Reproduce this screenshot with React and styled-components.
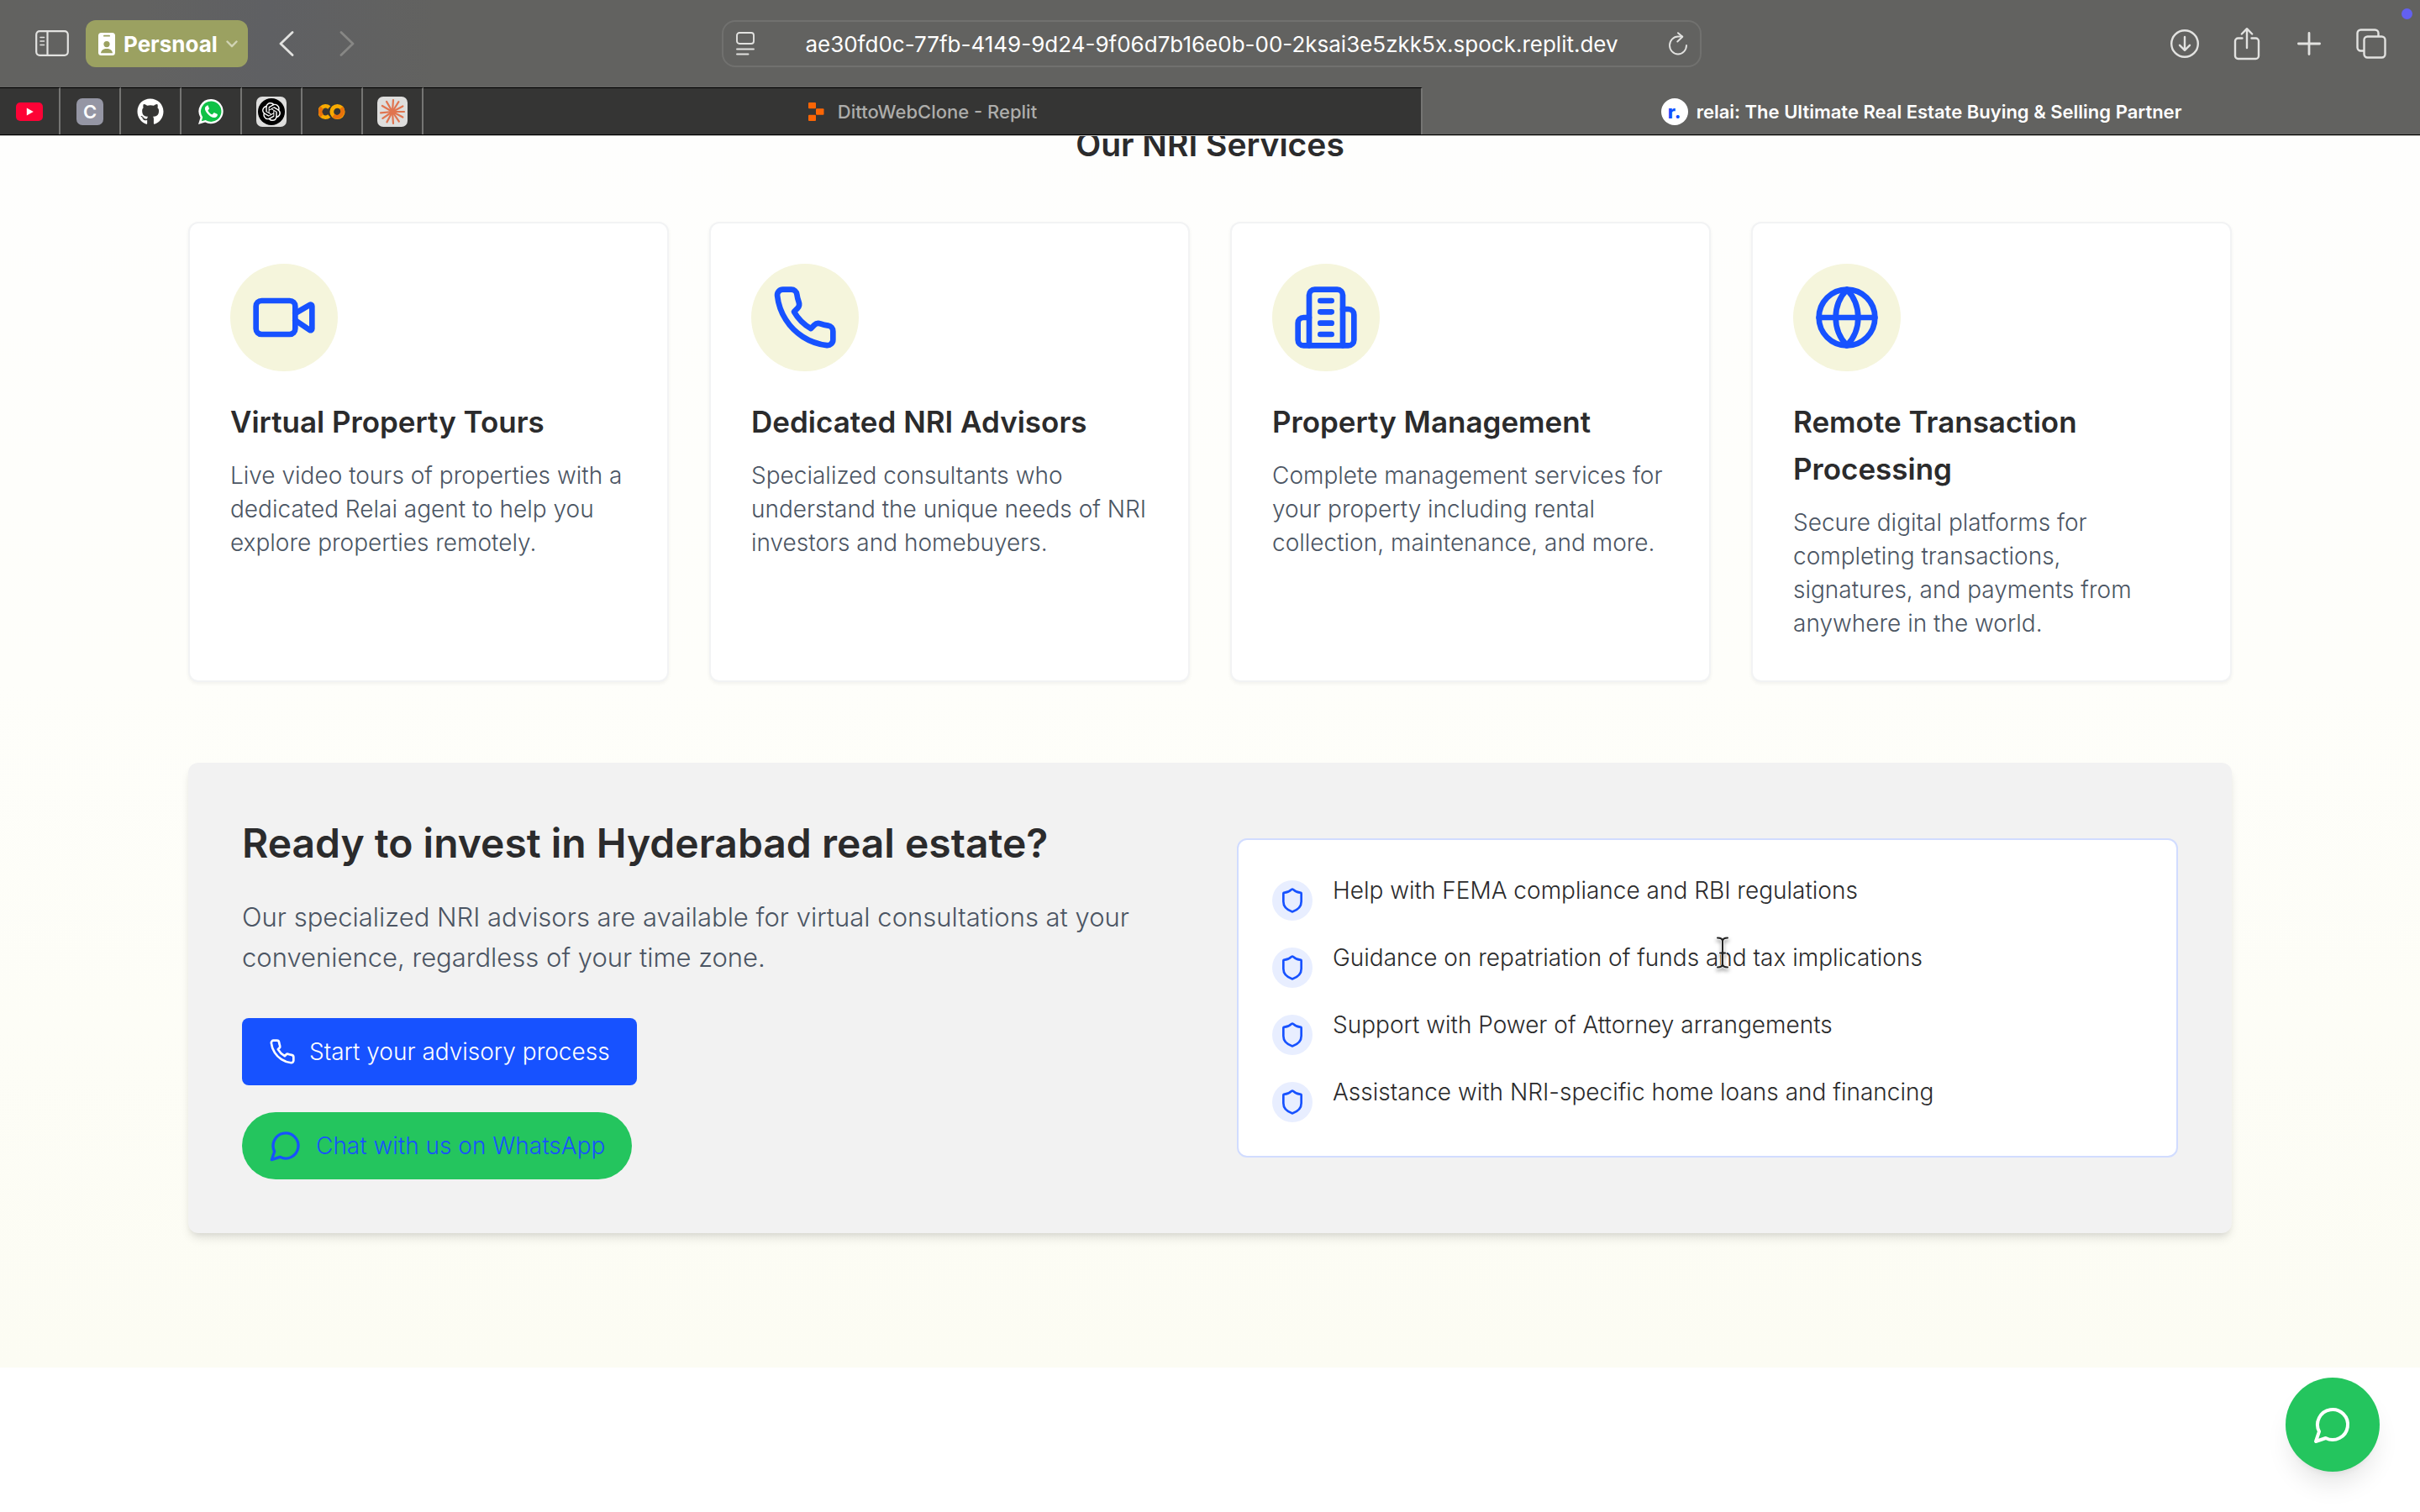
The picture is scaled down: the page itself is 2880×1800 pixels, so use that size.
import React from "react";
import styled, { createGlobalStyle } from "styled-components";
import { FaGithub } from "react-icons/fa";
import { SiOpenai } from "react-icons/si";

const GlobalStyle = createGlobalStyle`
  *, *::before, *::after { box-sizing: border-box; }
  body {
    margin: 0;
    background: #ffffff;
    color: #2b2b2c;
    font-family: Inter, "Liberation Sans", sans-serif;
    font-weight: 300;
    -webkit-font-smoothing: antialiased;
  }
  h2, h3, p, ul { margin: 0; padding: 0; }
  button, input { font: inherit; color: inherit; }
  svg { display: block; flex: none; }
`;

/* ---------- browser chrome ---------- */

const Page = styled.div`
  display: flex;
  flex-direction: column;
  min-height: 100vh;
`;

const Chrome = styled.header`
  position: relative;
  z-index: 2;
  background: linear-gradient(90deg, #626260 0%, #626261 6%, #5f6063 11%, #626260 18%, #626260 100%);
  box-shadow: 0 1px 0 #c2c2bf;
  color: #e2e2e0;
`;

const Toolbar = styled.div`
  display: grid;
  grid-template-columns: 1fr minmax(0, 1166px) 1fr;
  align-items: center;
  height: 104px;
  padding: 0 34px 0 38px;
`;

const ToolGroup = styled.div`
  display: flex;
  align-items: center;
  justify-content: ${(p) => (p.$end ? "flex-end" : "flex-start")};
  gap: ${(p) => p.$gap}px;
`;

const IconButton = styled.button`
  display: flex;
  align-items: center;
  justify-content: center;
  width: 48px;
  height: 56px;
  padding: 0;
  border: 0;
  background: none;
  color: ${(p) => (p.disabled ? "#878785" : "#e2e2e0")};
`;

const ProfileButton = styled.button`
  display: flex;
  align-items: center;
  gap: 10px;
  height: 56px;
  margin-right: 6px;
  padding: 0 12px 0 15px;
  border: 0;
  border-radius: 12px;
  background: #9ba161;
  color: #ffffff;
  font-size: 26px;
  font-weight: 700;
`;

const AddressBar = styled.form`
  display: flex;
  align-items: center;
  height: 56px;
  padding: 0 8px;
  border: 2px solid #71716f;
  border-radius: 16px;
`;

const AddressInput = styled.input`
  flex: 1;
  min-width: 0;
  padding: 0;
  border: 0;
  outline: 0;
  background: none;
  color: #ffffff;
  font-size: 26px;
  font-weight: 400;
  text-align: center;
`;

const AddressButton = styled.button`
  display: flex;
  justify-content: center;
  width: 36px;
  padding: 0;
  border: 0;
  background: none;
`;

const NotificationDot = styled.span`
  position: absolute;
  top: 10px;
  right: 9px;
  width: 13px;
  height: 13px;
  border-radius: 50%;
  background: #6360f0;
`;

const TabStrip = styled.nav`
  display: flex;
  height: 57px;
  border-bottom: 1px solid #000000;
`;

const PinnedTab = styled.button`
  display: flex;
  align-items: center;
  justify-content: center;
  width: 72px;
  padding: 0;
  border: 0;
  border-top: 1px solid #000000;
  border-right: 2px solid #757573;
  background: #353534;
`;

const Tab = styled.button`
  display: flex;
  flex: 1;
  align-items: center;
  justify-content: center;
  gap: ${(p) => (p.$active ? 10 : 16)}px;
  min-width: 0;
  padding: 0;
  border: 0;
  border-top: 1px solid ${(p) => (p.$active ? "transparent" : "#000000")};
  border-right: ${(p) => (p.$active ? "0" : "2px solid #757573")};
  background: ${(p) => (p.$active ? "transparent" : "#353534")};
  color: ${(p) => (p.$active ? "#ffffff" : "#adadab")};
  font-size: 22px;
  font-weight: ${(p) => (p.$active ? 600 : 500)};
  white-space: nowrap;
`;

const LetterBadge = styled.span`
  display: flex;
  align-items: center;
  justify-content: center;
  width: 32px;
  height: 32px;
  border-radius: 7px;
  background: #9596a4;
  color: #ffffff;
  font-size: 22px;
  font-weight: 600;
`;

const AppTile = styled.span`
  display: flex;
  align-items: center;
  justify-content: center;
  width: 36px;
  height: 36px;
  border-radius: 7px;
  background: #dededd;
`;

const BlackDisc = styled.span`
  display: flex;
  align-items: center;
  justify-content: center;
  width: 32px;
  height: 32px;
  border-radius: 50%;
  background: #000000;
  color: #ffffff;
`;

const SiteBadge = styled.span`
  display: flex;
  align-items: center;
  justify-content: center;
  width: 32px;
  height: 32px;
  border-radius: 50%;
  background: #ffffff;
  color: #1150ff;
  font-size: 22px;
  font-weight: 800;
`;

const Stroke = ({ size, width = 2, viewBox = "0 0 24 24", children }) => (
  <svg
    width={size}
    height={size}
    viewBox={viewBox}
    fill="none"
    stroke="currentColor"
    strokeWidth={width}
    strokeLinecap="round"
    strokeLinejoin="round"
    aria-hidden="true"
  >
    {children}
  </svg>
);

const SidebarIcon = () => (
  <svg width="40" height="32" viewBox="0 0 40 32" fill="none" stroke="currentColor" strokeWidth="2.2" strokeLinecap="round">
    <rect x="1.2" y="1.2" width="37.6" height="28.6" rx="4" />
    <path d="M14.5 1.5v28" />
    <path d="M6 8.5h4.5M6 13h4.5M6 17.5h4.5" strokeWidth="1.6" />
  </svg>
);

const BadgeIcon = () => (
  <svg width="20" height="27" viewBox="0 0 20 27">
    <rect width="20" height="27" rx="3.5" fill="#ffffff" />
    <rect x="6" y="2.8" width="8" height="1.8" rx=".9" fill="#9ba161" />
    <circle cx="10" cy="13.6" r="3.6" fill="#9ba161" />
    <path d="M3 24.2c.4-3.4 3.2-5.2 7-5.2s6.600 1.800 7 5.200z" fill="#9ba161" />
  </svg>
);

const ChevronIcon = () => (
  <svg width="14" height="9" viewBox="0 0 14 9" fill="none" stroke="#d0d3b3" strokeWidth="2.4" strokeLinecap="round" strokeLinejoin="round">
    <path d="M1.500 1.500 7 7.200l5.500-5.700" />
  </svg>
);

const ArrowIcon = ({ d }) => (
  <svg width="18" height="30" viewBox="0 0 18 30" fill="none" stroke="currentColor" strokeWidth="2.8" strokeLinecap="round" strokeLinejoin="round">
    <path d={d} />
  </svg>
);

const ReaderIcon = () => (
  <svg width="24" height="28" viewBox="0 0 24 28" fill="none" stroke="currentColor" strokeWidth="1.900" strokeLinecap="round">
    <rect x="2" y="1" width="20" height="13" rx="3" />
    <path d="M2 20.500h20M2 26.500h13.500" />
  </svg>
);

const ReloadIcon = () => (
  <svg width="24" height="28" viewBox="0 0 24 28" fill="none" stroke="currentColor" strokeWidth="1.900" strokeLinecap="round" strokeLinejoin="round">
    <path d="M22 16a10 10.500 0 1 1-10-10.500h5" />
    <path d="M12 1.200 17.300 5.800 11.300 11.500" />
  </svg>
);

const DownloadIcon = () => (
  <svg width="36" height="36" viewBox="0 0 36 36" fill="none" stroke="currentColor" strokeWidth="2.400" strokeLinecap="round" strokeLinejoin="round">
    <circle cx="18" cy="18" r="15.800" />
    <path d="M18 10v15.500M12 19.800l6 6 6-6" />
  </svg>
);

const ShareIcon = () => (
  <svg width="32" height="40" viewBox="0 0 32 40" fill="none" stroke="currentColor" strokeWidth="2.400" strokeLinecap="round" strokeLinejoin="round">
    <path d="M10.500 13.500H5.500a3.500 3.500 0 0 0-3.500 3.500v17.500A3.500 3.500 0 0 0 5.500 38h21a3.500 3.500 0 0 0 3.500-3.500V17a3.500 3.500 0 0 0-3.500-3.500h-5" />
    <path d="M16 25V2.500M9.800 8.500 16 2.200l6.200 6.300" />
  </svg>
);

const PlusIcon = () => (
  <svg width="28" height="28" viewBox="0 0 28 28" fill="none" stroke="currentColor" strokeWidth="2.800" strokeLinecap="round">
    <path d="M14 1.400v25.200M1.400 14h25.200" />
  </svg>
);

const WindowsIcon = () => (
  <svg width="36" height="36" viewBox="0 0 36 36" fill="none" stroke="currentColor" strokeWidth="2.400" strokeLinejoin="round">
    <rect x="9.500" y="9.500" width="25" height="25" rx="4" />
    <path d="M9.500 26.500H5.500a4 4 0 0 1-4-4v-17a4 4 0 0 1 4-4h17a4 4 0 0 1 4 4v4" />
  </svg>
);

const YoutubeLogo = () => (
  <svg width="32" height="22" viewBox="0 0 32 22">
    <rect width="32" height="22" rx="5" fill="#fd0336" />
    <path d="M12.800 6.600v8.800l8-4.400z" fill="#ffffff" />
  </svg>
);

const WhatsappLogo = () => (
  <svg width="30" height="30" viewBox="0 0 30 30">
    <path d="M15.200 0a14.600 14.600 0 1 1-7 27.500L0 30l2.500-8A14.600 14.600 0 0 1 15.200 0z" fill="#ffffff" />
    <path d="M15.200 2.500a12.200 12.200 0 1 1-6.500 22.500L3.800 26.300l1.400-4.700A12.200 12.200 0 0 1 15.200 2.500z" fill="#10c146" />
    <path
      d="M10.600 8c-.6 0-1.300.3-1.900 1.100-1.700 2.100-.4 5.200 1.900 8 2.500 3.100 6 5.100 8.600 5 1.900-.1 3.600-1.300 3.700-3.500 0-.4-.1-.6-.5-.8l-3.200-1.500c-.4-.2-.7-.1-1 .3l-1.200 1.500c-.3.3-.6.3-1 .1-2-1-3.400-2.400-4.400-4.300-.2-.4-.1-.6.200-.9l1-1.300c.2-.3.200-.5.100-.8l-1.400-3.300c-.2-.4-.5-.6-.9-.600z"
      fill="#ffffff"
    />
  </svg>
);

const ColabLogo = () => (
  <svg width="32" height="20" viewBox="0 0 32 20" fill="none" strokeWidth="4.800">
    <path d="M12.800 15A6.700 6.700 0 1 1 12.800 5" stroke="#f9ab00" />
    <path d="M4.200 14.700a6.700 6.700 0 0 1 0-9.400" stroke="#e8710a" />
    <circle cx="22.500" cy="10" r="6.700" stroke="#f9ab00" />
    <path d="M27.200 5.300a6.700 6.700 0 0 1-9.400 9.400" stroke="#e8710a" />
  </svg>
);

const BURST_ANGLES = [4, 32, 62, 90, 118, 146, 176, 208, 236, 264, 300, 330];

const BurstLogo = () => (
  <svg width="32" height="32" viewBox="0 0 32 32" stroke="#e0744f" strokeWidth="2.200" strokeLinecap="round">
    {BURST_ANGLES.map((a) => (
      <path key={a} d="M16 16V2" transform={`rotate(${a} 16 16)`} />
    ))}
    <circle cx="16" cy="16" r="3" fill="#e0744f" stroke="none" />
  </svg>
);

const ReplitLogo = () => (
  <svg width="20" height="24" viewBox="0 0 20 24" fill="#fb6505">
    <rect x="1" y="1" width="9" height="7.300" rx="1" />
    <rect x="10" y="8.300" width="9.500" height="7.400" rx="1" />
    <rect x="1" y="15.700" width="9" height="7.300" rx="1" />
  </svg>
);

/* ---------- page icons ---------- */

const VideoIcon = ({ size }) => (
  <Stroke size={size}>
    <path d="m16 13 5.223 3.482a.5.5 0 0 0 .777-.416V7.870a.5.5 0 0 0-.752-.432L16 10.500" />
    <rect x="2" y="6" width="14" height="12" rx="2" />
  </Stroke>
);

const PhoneIcon = ({ size }) => (
  <Stroke size={size}>
    <path d="M22 16.920v3a2 2 0 0 1-2.180 2 19.790 19.790 0 0 1-8.630-3.070 19.500 19.500 0 0 1-6-6 19.790 19.790 0 0 1-3.070-8.670A2 2 0 0 1 4.110 2h3a2 2 0 0 1 2 1.720 12.840 12.840 0 0 0 .7 2.810 2 2 0 0 1-.45 2.110L8.090 9.910a16 16 0 0 0 6 6l1.270-1.270a2 2 0 0 1 2.110-.45 12.840 12.840 0 0 0 2.810.7A2 2 0 0 1 22 16.920z" />
  </Stroke>
);

const BuildingIcon = ({ size }) => (
  <Stroke size={size}>
    <path d="M6 22V4a2 2 0 0 1 2-2h8a2 2 0 0 1 2 2v18Z" />
    <path d="M6 12H4a2 2 0 0 0-2 2v6a2 2 0 0 0 2 2h2" />
    <path d="M18 9h2a2 2 0 0 1 2 2v9a2 2 0 0 1-2 2h-2" />
    <path d="M10 6h4M10 10h4M10 14h4M10 18h4" />
  </Stroke>
);

const GlobeIcon = ({ size }) => (
  <Stroke size={size}>
    <circle cx="12" cy="12" r="10" />
    <path d="M12 2a14.500 14.500 0 0 0 0 20 14.500 14.500 0 0 0 0-20" />
    <path d="M2 12h20" />
  </Stroke>
);

const ShieldIcon = ({ size }) => (
  <Stroke size={size}>
    <path d="M20 13c0 5-3.500 7.500-7.660 8.950a1 1 0 0 1-.67-.01C7.500 20.500 4 18 4 13V6a1 1 0 0 1 1-1c2 0 4.500-1.200 6.240-2.720a1.170 1.170 0 0 1 1.520 0C14.510 3.810 17 5 19 5a1 1 0 0 1 1 1z" />
  </Stroke>
);

const ChatIcon = ({ size }) => (
  <Stroke size={size}>
    <path d="M7.900 20A9 9 0 1 0 4 16.100L2 22Z" />
  </Stroke>
);

/* ---------- page content ---------- */

const Main = styled.main`
  flex: 1;
  overflow: hidden;
  background: #ffffff;
`;

const Section = styled.section`
  padding-bottom: 160px;
  background: linear-gradient(180deg, #fefefd 0%, #fefefa 45%, #fcfcf3 100%);
`;

const Container = styled.div`
  max-width: 2560px;
  margin: 0 auto;
  padding: 0 64px;
`;

const SectionTitle = styled.h2`
  margin: -17px 0 64px;
  font-size: 39px;
  line-height: 56px;
  font-weight: 600;
  text-align: center;
`;

const CardGrid = styled.div`
  display: grid;
  grid-template-columns: repeat(4, minmax(0, 1fr));
  gap: 48px;
  margin-bottom: 96px;
`;

const Card = styled.article`
  padding: 48px;
  border: 2px solid #f2f3f4;
  border-radius: 12px;
  background: #ffffff;
  box-shadow: 0 2px 4px rgba(0, 0, 0, 0.05);
`;

const CardIcon = styled.div`
  display: flex;
  align-items: center;
  justify-content: center;
  width: 128px;
  height: 128px;
  margin-bottom: 32px;
  border-radius: 50%;
  background: #f5f5dc;
  color: #1752ff;
`;

const CardTitle = styled.h3`
  margin-bottom: 16px;
  font-size: 35px;
  line-height: 56px;
  font-weight: 600;
`;

const CardText = styled.p`
  color: #4b5563;
  font-size: 28px;
  line-height: 40px;
  white-space: pre-line;
`;

const Panel = styled.div`
  display: grid;
  grid-template-columns: repeat(2, minmax(0, 1fr));
  align-items: center;
  gap: 64px;
  padding: 64px;
  border-radius: 12px;
  background: #f2f2f2;
  box-shadow: 0 8px 12px -2px rgba(0, 0, 0, 0.1), 0 4px 8px -4px rgba(0, 0, 0, 0.1);
`;

const PanelTitle = styled.h2`
  margin-bottom: 32px;
  font-size: 48px;
  line-height: 64px;
  font-weight: 600;
`;

const PanelText = styled.p`
  margin-bottom: 48px;
  color: #4b5563;
  font-size: 31px;
  line-height: 48px;
`;

const Actions = styled.div`
  display: flex;
  flex-direction: column;
  align-items: flex-start;
  gap: 32px;
`;

const ActionLink = styled.a`
  display: flex;
  align-items: center;
  gap: 16px;
  height: 80px;
  padding: 0 32px;
  border-radius: ${(p) => (p.$pill ? 40 : 8)}px;
  background: ${(p) => (p.$pill ? "#24c55e" : "#1752ff")};
  color: ${(p) => (p.$pill ? "#1752ff" : "#ffffff")};
  font-size: 28px;
  text-decoration: none;
`;

const Benefits = styled.ul`
  display: flex;
  flex-direction: column;
  gap: 24px;
  padding: 40px;
  border: 2px solid #d1dcff;
  border-radius: 12px;
  background: #ffffff;
  list-style: none;
`;

const Benefit = styled.li`
  display: flex;
  align-items: flex-start;
  gap: 24px;
  font-size: 28px;
  line-height: 40px;
`;

const BenefitIcon = styled.span`
  display: flex;
  flex: none;
  align-items: center;
  justify-content: center;
  width: 48px;
  height: 48px;
  margin-top: 8px;
  border-radius: 50%;
  background: #e8eeff;
  color: #1752ff;
`;

const ChatFab = styled.a`
  position: fixed;
  right: 48px;
  bottom: 48px;
  display: flex;
  align-items: center;
  justify-content: center;
  width: 112px;
  height: 112px;
  border-radius: 50%;
  background: #24c55e;
  color: #ffffff;
  box-shadow: 0 20px 30px -6px rgba(0, 0, 0, 0.1), 0 8px 12px -8px rgba(0, 0, 0, 0.1);
`;

const PointerMark = styled.svg`
  position: fixed;
  left: 2040px;
  top: 1114px;
  z-index: 3;
  pointer-events: none;
  filter: drop-shadow(0 3px 2px rgba(0, 0, 0, 0.35));
`;

const services = [
  {
    Icon: VideoIcon,
    title: "Virtual Property Tours",
    text: "Live video tours of properties with a dedicated Relai agent to help you explore properties remotely.",
  },
  {
    Icon: PhoneIcon,
    title: "Dedicated NRI Advisors",
    text: "Specialized consultants who understand the unique needs of NRI investors and homebuyers.",
  },
  {
    Icon: BuildingIcon,
    title: "Property Management",
    text: "Complete management services for your property including rental collection, maintenance, and more.",
  },
  {
    Icon: GlobeIcon,
    title: "Remote Transaction Processing",
    text: "Secure digital platforms for completing transactions,\nsignatures, and payments from anywhere in the world.",
  },
];

const benefits = [
  "Help with FEMA compliance and RBI regulations",
  "Guidance on repatriation of funds and tax implications",
  "Support with Power of Attorney arrangements",
  "Assistance with NRI-specific home loans and financing",
];

const pinned = [
  ["YouTube", <YoutubeLogo />],
  ["C", <LetterBadge>C</LetterBadge>],
  ["GitHub", <FaGithub size={32} color="#ffffff" />],
  ["WhatsApp", <WhatsappLogo />],
  ["ChatGPT", <AppTile><BlackDisc><SiOpenai size={22} /></BlackDisc></AppTile>],
  ["Colab", <ColabLogo />],
  ["Claude", <AppTile><BurstLogo /></AppTile>],
];

function BrowserChrome() {
  return (
    <Chrome>
      <Toolbar>
        <ToolGroup $gap={16}>
          <IconButton type="button" aria-label="Show sidebar"><SidebarIcon /></IconButton>
          <ProfileButton type="button">
            <BadgeIcon />
            Persnoal
            <ChevronIcon />
          </ProfileButton>
          <ToolGroup $gap={24}>
            <IconButton type="button" aria-label="Back"><ArrowIcon d="M16 1.500 2 15l14 13.500" /></IconButton>
            <IconButton type="button" aria-label="Forward" disabled><ArrowIcon d="M2 1.500 16 15 2 28.500" /></IconButton>
          </ToolGroup>
        </ToolGroup>
        <AddressBar onSubmit={(e) => e.preventDefault()}>
          <AddressButton type="button" aria-label="Page menu"><ReaderIcon /></AddressButton>
          <AddressInput
            aria-label="Address"
            defaultValue="ae30fd0c-77fb-4149-9d24-9f06d7b16e0b-00-2ksai3e5zkk5x.spock.replit.dev"
          />
          <AddressButton type="submit" aria-label="Reload"><ReloadIcon /></AddressButton>
        </AddressBar>
        <ToolGroup $end $gap={26}>
          <IconButton type="button" aria-label="Downloads"><DownloadIcon /></IconButton>
          <IconButton type="button" aria-label="Share"><ShareIcon /></IconButton>
          <IconButton type="button" aria-label="New tab"><PlusIcon /></IconButton>
          <IconButton type="button" aria-label="Tab overview"><WindowsIcon /></IconButton>
        </ToolGroup>
      </Toolbar>
      <NotificationDot />
      <TabStrip aria-label="Tabs">
        {pinned.map(([name, icon]) => (
          <PinnedTab key={name} type="button" aria-label={name}>{icon}</PinnedTab>
        ))}
        <Tab type="button"><ReplitLogo />DittoWebClone - Replit</Tab>
        <Tab type="button" $active>
          <SiteBadge>r.</SiteBadge>
          relai: The Ultimate Real Estate Buying &amp; Selling Partner
        </Tab>
      </TabStrip>
    </Chrome>
  );
}

export default function App() {
  return (
    <Page>
      <GlobalStyle />
      <BrowserChrome />
      <Main>
        <Section>
          <Container>
            <SectionTitle>Our NRI Services</SectionTitle>
            <CardGrid>
              {services.map(({ Icon, title, text }) => (
                <Card key={title}>
                  <CardIcon><Icon size={80} /></CardIcon>
                  <CardTitle>{title}</CardTitle>
                  <CardText>{text}</CardText>
                </Card>
              ))}
            </CardGrid>
            <Panel>
              <div>
                <PanelTitle>Ready to invest in Hyderabad real estate?</PanelTitle>
                <PanelText>
                  Our specialized NRI advisors are available for virtual consultations at your
                  convenience, regardless of your time zone.
                </PanelText>
                <Actions>
                  <ActionLink href="#advisory"><PhoneIcon size={32} />Start your advisory process</ActionLink>
                  <ActionLink href="#whatsapp" $pill><ChatIcon size={40} />Chat with us on WhatsApp</ActionLink>
                </Actions>
              </div>
              <Benefits>
                {benefits.map((text) => (
                  <Benefit key={text}>
                    <BenefitIcon><ShieldIcon size={32} /></BenefitIcon>
                    {text}
                  </Benefit>
                ))}
              </Benefits>
            </Panel>
          </Container>
        </Section>
      </Main>
      <ChatFab href="#chat" aria-label="Chat on WhatsApp"><ChatIcon size={48} /></ChatFab>
      <PointerMark width="20" height="40" viewBox="0 0 20 40" fill="none" strokeLinecap="round" aria-hidden="true">
        <path d="M4 2.500c3.500 0 6 1.200 6 4v27c0 2.800-2.500 4-6 4M16 2.500c-3.500 0-6 1.200-6 4v27c0 2.800 2.500 4 6 4M7 20.500h6" stroke="#ffffff" strokeWidth="4" strokeOpacity=".7" />
        <path d="M4 2.500c3.500 0 6 1.200 6 4v27c0 2.800-2.500 4-6 4M16 2.500c-3.500 0-6 1.200-6 4v27c0 2.800 2.500 4 6 4M7 20.500h6" stroke="#222222" strokeWidth="2" />
      </PointerMark>
    </Page>
  );
}
